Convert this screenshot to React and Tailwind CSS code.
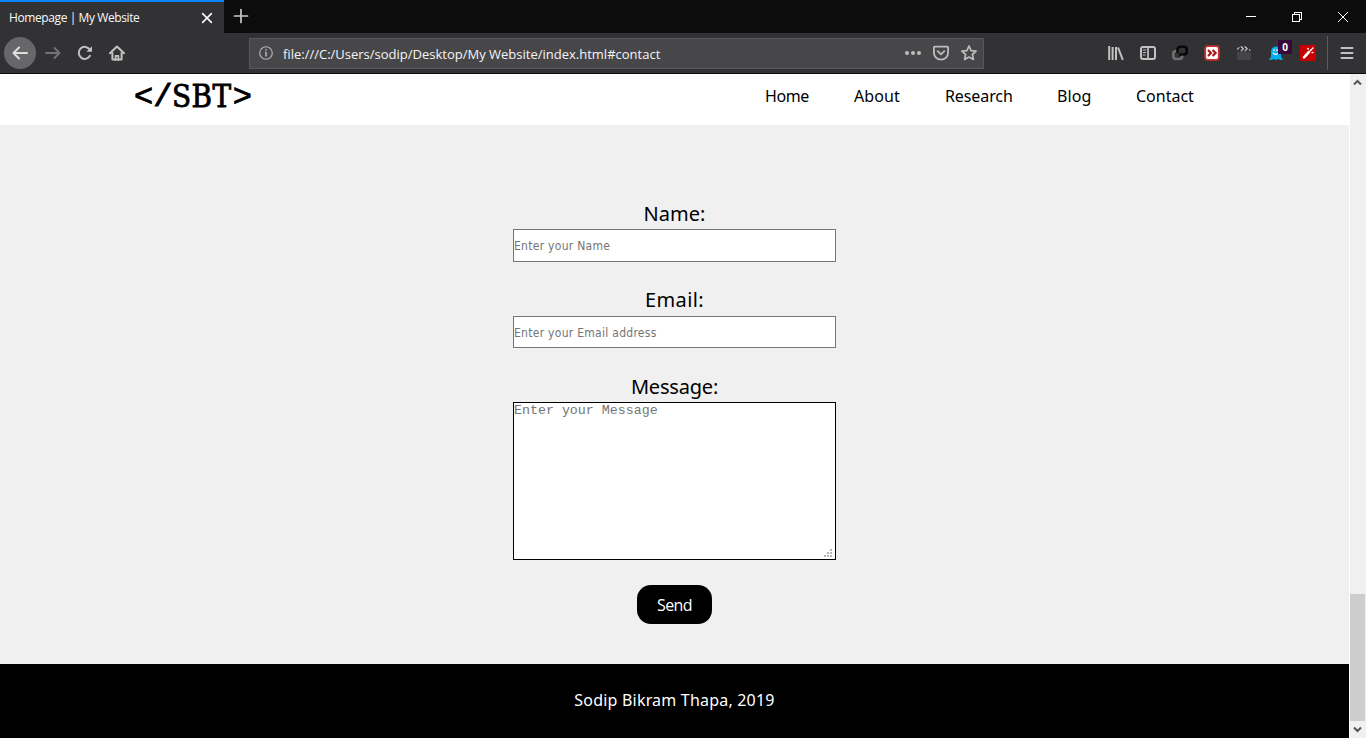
import React from "react";

const UI = "font-['Open_Sans','Noto_Sans',sans-serif]";
const BODY = "font-['Noto_Sans','Open_Sans',sans-serif]";

function Icon({ size = 16, sw = 2, className = "", children }) {
  return (
    <svg
      width={size}
      height={size}
      viewBox="0 0 16 16"
      fill="none"
      stroke="currentColor"
      strokeWidth={sw}
      strokeLinecap="round"
      strokeLinejoin="round"
      className={"block shrink-0 " + className}
    >
      {children}
    </svg>
  );
}

function TabStrip() {
  return (
    <div className="flex h-[33px] bg-[#0c0c0d]">
      <div className={`flex w-[224px] items-center justify-between border-t-2 border-[#0a84ff] bg-[#323234] pr-[10px] pl-[9px] text-[12px] text-[#f9f9fa] ${UI}`}>
        <span className="pt-px whitespace-nowrap tracking-[-0.4px]">Homepage | My Website</span>
        <Icon size={14} sw={1.8} className="text-white">
          <path d="M3 3l10 10M13 3L3 13" />
        </Icon>
      </div>
      <div className="flex flex-1 items-center justify-between">
        <Icon sw={1.7} className="ml-[9px] -mt-px text-[#c8c8c9]">
          <path d="M8 1.5v13M1.5 8h13" />
        </Icon>
        <div className="flex text-white">
          <div className="flex w-[46px] justify-center">
            <svg width="12" height="12" shapeRendering="crispEdges"><path d="M1 5.5h10" stroke="currentColor" /></svg>
          </div>
          <div className="flex w-[46px] justify-center">
            <svg width="12" height="12" fill="none" stroke="currentColor" shapeRendering="crispEdges">
              <path d="M1.5 3.5h7v7h-7zM3.5 3.5v-2h7v7h-2" />
            </svg>
          </div>
          <div className="flex w-[46px] justify-center">
            <svg width="12" height="12" fill="none" stroke="currentColor"><path d="M1 1l10 10M11 1L1 11" /></svg>
          </div>
        </div>
      </div>
    </div>
  );
}

function Toolbar() {
  return (
    <div className="flex h-[41px] items-center border-b border-[#0c0c0d] bg-[#323234] text-[#c2c2c3]">
      <div className="ml-1 flex size-8 items-center justify-center rounded-full bg-[#676769]">
        <Icon sw={2} className="text-[#dededf]"><path d="M15 8H1.5M7 2.5L1.5 8 7 13.5" /></Icon>
      </div>
      <Icon sw={1.9} className="ml-[9px] text-[#737375]"><path d="M1 8h13.5M9.5 3l5 5-5 5" /></Icon>
      <Icon className="ml-4">
        <path d="M13.3 10.2A6 6 0 1 1 12.8 4.6" strokeLinecap="butt" />
        <path d="M15 1.2v5.6H9.4z" fill="currentColor" stroke="none" />
      </Icon>
      <Icon className="ml-4" sw={2}>
        <path d="M1 8.3L8 1.5l7 6.8M3.4 8v6.6h9.2V8" />
        <path d="M6.6 15v-4.2h2.800V15" strokeWidth="1.8" />
      </Icon>
      <div className="ml-[124px] flex h-[31px] w-[735px] items-center border border-[#58585a] bg-[#474749]">
        <Icon size={14} sw={1.3} className="ml-[9px] text-[#b5b5b7]">
          <circle cx="8" cy="8" r="7.2" />
          <path d="M8 7.3v4.2" strokeWidth="1.8" />
          <path d="M8 4.4v.2" strokeWidth="1.9" />
        </Icon>
        <span className={`ml-[10px] flex-1 pt-[3px] whitespace-nowrap text-[13px] text-[#f5f5f6] ${UI}`}>
          file:///C:/Users/sodip/Desktop/My Website/index.html#contact
        </span>
        <Icon className="text-[#bdbdbe]">
          <g fill="currentColor" stroke="none"><circle cx="2" cy="8" r="2" /><circle cx="8" cy="8" r="2" /><circle cx="14" cy="8" r="2" /></g>
        </Icon>
        <Icon className="ml-3 text-[#bdbdbe]" sw={1.8}>
          <path d="M1.7 1.7h12.6q.8 0 .8.8V7.5a7.1 7.1 0 0 1-14.2 0V2.5q0-.8.8-.8z" />
          <path d="M4.7 6.2L8 9.4l3.3-3.2" />
        </Icon>
        <Icon className="mr-[6px] ml-3 text-[#bdbdbe]" sw={1.7}>
          <path d="M8 1l2.1 4.6 5 .5-3.7 3.4 1 5L8 12l-4.4 2.5 1-5L.9 6.1l5-.5z" />
        </Icon>
      </div>
      <div className="ml-[124px] flex items-center gap-4">
        <Icon>
          <g strokeLinecap="butt"><path d="M1.2 1v14M4.6 2v13M8 2v13" strokeWidth="2" /><path d="M10 2.500l4.800 12.300" strokeWidth="2" /></g>
        </Icon>
        <Icon sw={2}>
          <rect x="1" y="2" width="14" height="12" rx="2" />
          <path d="M8 2v12" strokeWidth="1.7" />
          <path d="M3.3 5h2.4M3.3 7.5h2.4M3.3 10h1.8" strokeWidth="1" />
        </Icon>
        <Icon sw={2.6}>
          <path d="M5.500 6H4a2.700 2.700 0 0 0-2.700 2.700v2.600A2.700 2.700 0 0 0 4 14h3.500a2.700 2.700 0 0 0 2.700-2.700V10" stroke="#707072" />
          <path d="M5.500 7V4.500A2.700 2.700 0 0 1 8.200 1.800H12a2.700 2.700 0 0 1 2.700 2.700v2.300A2.700 2.700 0 0 1 12 9.500H8" stroke="#080808" />
        </Icon>
        <Icon>
          <rect x="1.200" y="1.200" width="13.600" height="13.600" rx="2.500" fill="#fff" stroke="#c93030" strokeWidth="1.800" />
          <path d="M4 5l3 3-3 3M8.600 5l3 3-3 3" stroke="#a81616" strokeWidth="2.200" strokeLinecap="butt" strokeLinejoin="miter" />
        </Icon>
        <Icon sw={1.2}>
          <path d="M1 7h14v6q0 2-2 2H3q-2 0-2-2z" fill="#454547" stroke="none" />
          <path d="M1.500 4.200L3 2.600M5.200 1.700l2.200 2.100-2.200 2.100M9 1.700l2.200 2.100L9 5.900M13.800 4.500v.8" stroke="#c8c8c9" />
        </Icon>
        <div className="relative">
          <Icon>
            <path d="M3 12V6.500a5 5 0 0 1 10 0V12l2 2.600-2.500.4-2-1-2.300 1-2.300-1-2.200 1-2.900-.5z" fill="#00aef0" stroke="none" />
            <path d="M6 4.500v1.200M9 4.500v1.200M5.200 8.200q2.600 2.400 5 0" stroke="#fff" strokeWidth="1.2" />
          </Icon>
          <span className="absolute -top-[5px] left-[10px] flex h-[14px] w-[14px] items-center justify-center bg-[#38083a] font-['Open_Sans',sans-serif] text-[10px] font-bold text-white">0</span>
        </div>
        <Icon>
          <rect width="16" height="16" rx="1" fill="#c60000" stroke="none" />
          <path d="M4 12.300L9 7" stroke="#fff" strokeWidth="2.6" />
          <path d="M10.500 5.500l.8-.8M8 3.500v.5M12.800 3.200l-.3.300M12.300 7.500h.4" stroke="#fff" strokeWidth="1.7" />
        </Icon>
      </div>
      <div className="ml-[11px] h-[34px] w-px bg-[#5c5c5e]" />
      <Icon className="ml-[11px]" sw={2}><path d="M2.5 3h11M2.5 8h11M2.5 13h11" /></Icon>
    </div>
  );
}

function SiteHeader() {
  return (
    <header className="flex h-[51px] items-start bg-white text-black">
      <div className="ml-[134px] flex h-[44px] w-[118px] items-center leading-none whitespace-nowrap">
        <span className="w-[38px] pt-[3px] font-['Liberation_Mono',monospace] text-[32px] [-webkit-text-stroke:0.9px_black]">&lt;/</span>
        <span className="w-[61px] font-['DejaVu_Serif_Condensed','DejaVu_Serif',serif] text-[31px] tracking-[0.5px] [-webkit-text-stroke:0.8px_black] [font-stretch:condensed]">SBT</span>
        <span className="pt-[3px] font-['Liberation_Mono',monospace] text-[32px] [-webkit-text-stroke:0.9px_black]">&gt;</span>
      </div>
      <nav className={`ml-[513px] flex pt-[10px] text-[16px] leading-6 whitespace-nowrap ${BODY}`}>
        <a className="w-[89px] tracking-[-0.4px]">Home</a>
        <a className="w-[91px] tracking-[0.1px]">About</a>
        <a className="w-[112px] tracking-[-0.1px]">Research</a>
        <a className="w-[79px] tracking-[0.1px]">Blog</a>
        <a>Contact</a>
      </nav>
    </header>
  );
}

function ContactForm() {
  const label = `block h-[30px] text-center text-[20px] leading-[30px] text-black ${BODY}`;
  const input = "block w-[323px] border border-[#767676] bg-white p-0 font-['DejaVu_Sans_Condensed','DejaVu_Sans',sans-serif] text-[12px] tracking-[0.28px] [font-stretch:condensed] placeholder:text-[#757575] placeholder:opacity-100";
  return (
    <form className="flex h-[539px] flex-col items-center bg-[#f0f0f0] pt-[74px]">
      <label className={label}>Name:</label>
      <input className={`h-[33px] ${input}`} placeholder="Enter your Name" />
      <label className={`mt-[23px] tracking-[0.4px] ${label}`}>Email:</label>
      <input className={`mt-[1px] h-[32px] pt-[1px] ${input}`} placeholder="Enter your Email address" />
      <label className={`mt-[24px] tracking-[-0.2px] ${label}`}>Message:</label>
      <div className="relative">
        <textarea
          className="block h-[158px] w-[323px] resize-none border border-black bg-white p-0 font-['Liberation_Mono',monospace] text-[13.3px] leading-[15px] placeholder:text-[#757575] placeholder:opacity-100"
          placeholder="Enter your Message"
        />
        <svg className="absolute right-[4px] bottom-[2px]" width="9" height="9" fill="#b4b4b4" shapeRendering="crispEdges">
          <path d="M7 0h2v2H7zM4 3h2v2H4zM7 3h2v2H7zM1 6h2v2H1zM4 6h2v2H4zM7 6h2v2H7z" />
        </svg>
      </div>
      <button type="button" className={`mt-[25px] h-[39px] w-[75px] rounded-[14px] bg-black text-[16px] tracking-[-0.6px] text-white ${UI}`}>
        Send
      </button>
    </form>
  );
}

function Scrollbar() {
  return (
    <div className="flex w-[17px] flex-col border-l border-white bg-[#f0f0f0] text-[#555]">
      <div className="flex h-[17px] w-[15px] items-center justify-center">
        <svg width="9" height="7" fill="none" stroke="currentColor" strokeWidth="2"><path d="M1 5.5L4.5 2 8 5.5" /></svg>
      </div>
      <div className="mt-[503px] h-[127px] w-[15px] bg-[#cdcdcd]" />
      <div className="flex h-[17px] w-[15px] items-center justify-center">
        <svg width="9" height="7" fill="none" stroke="currentColor" strokeWidth="2"><path d="M1 1.5L4.5 5 8 1.5" /></svg>
      </div>
    </div>
  );
}

export default function App() {
  return (
    <div className="flex h-[738px] w-[1366px] flex-col overflow-hidden">
      <TabStrip />
      <Toolbar />
      <div className="flex flex-1">
        <main className="w-[1349px]">
          <SiteHeader />
          <ContactForm />
          <footer className={`flex h-[74px] items-center justify-center bg-black pb-[2px] text-[16px] tracking-[0.2px] text-white ${BODY}`}>
            Sodip Bikram Thapa, 2019
          </footer>
        </main>
        <Scrollbar />
      </div>
    </div>
  );
}
